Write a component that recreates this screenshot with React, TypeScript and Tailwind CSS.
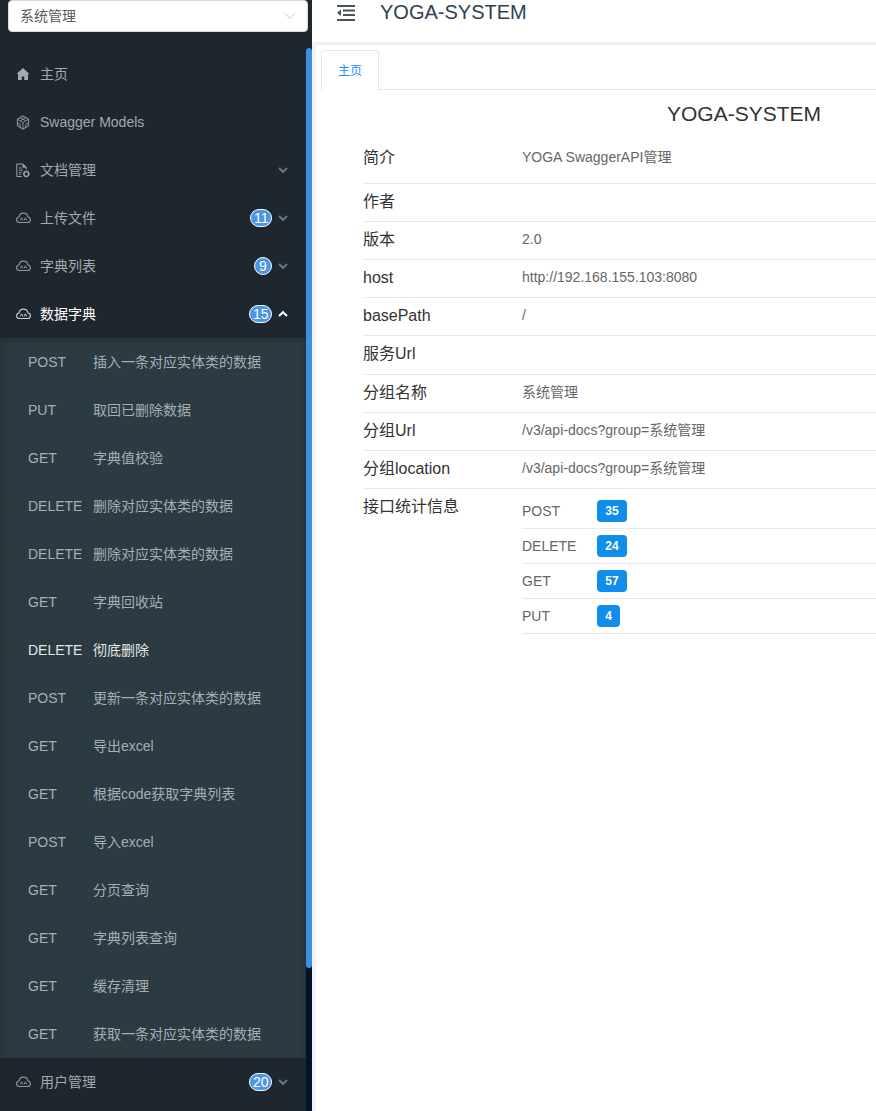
import React from "react";

const CJK = '"Liberation Sans","Noto Sans CJK SC",sans-serif';

function Chevron({ up = false, light = false }: { up?: boolean; light?: boolean }) {
  return (
    <svg width="10" height="10" viewBox="0 0 10 10" className="ml-[6px] shrink-0">
      <path
        d={up ? "M1 7 L5 3.2 L9 7" : "M1 3 L5 6.8 L9 3"}
        fill="none"
        stroke={light ? "#ffffff" : "#6f767b"}
        strokeWidth="2"
      />
    </svg>
  );
}

function Cloud({ color = "#8f969b" }: { color?: string }) {
  return (
    <svg width="15" height="14" viewBox="0 0 15 14" className="shrink-0 -ml-[0.5px]">
      <path
        d="M3.6 11.5 C1.7 11.5 .6 10.2 .6 8.7 C.6 7.3 1.6 6.2 3 6 C3.4 3.6 5.2 2.1 7.5 2.1 C9.8 2.1 11.5 3.6 12 6 C13.4 6.2 14.4 7.3 14.4 8.7 C14.4 10.2 13.3 11.5 11.4 11.5 Z"
        fill="none"
        stroke={color}
        strokeWidth="1.1"
      />
      <path d="M4.4 9.4 L5.6 6.8 L6.8 9.4 M8.2 9.4 L9.4 6.8 L10.6 9.4" fill="none" stroke={color} strokeWidth="1" />
    </svg>
  );
}

function Home() {
  return (
    <svg width="14" height="14" viewBox="0 0 14 14" className="shrink-0">
      <path d="M7 1 L13.2 6.8 L12 7.2 V13 H8.2 V9.4 H5.8 V13 H2 V7.2 L.8 6.8 Z" fill="#a3a9ad" />
    </svg>
  );
}

function Sandbox() {
  return (
    <svg width="14" height="15" viewBox="0 0 14 15" className="shrink-0" fill="none" stroke="#8d9499" strokeWidth="1.1">
      <path d="M7 1 L12.6 4.2 V10.8 L7 14 L1.4 10.8 V4.2 Z" />
      <path
        d="M1.4 4.2 L7 7.5 L12.6 4.2 M7 7.5 V14 M4.2 2.6 L9.8 5.9 M9.8 2.6 L4.2 5.9 M4.2 9 V12.4 M9.8 9 V12.4 M1.4 8 L4.2 9 M12.6 8 L9.8 9"
        strokeWidth=".9"
      />
    </svg>
  );
}

function DocIcon() {
  return (
    <svg width="14" height="15" viewBox="0 0 14 15" className="shrink-0" fill="none" stroke="#9aa1a6" strokeWidth="1">
      <path d="M6 13.5 H.8 V1 H7 L10.2 4.2 V6.5" />
      <path d="M7 1 V4.2 H10.2 Z" fill="#9aa1a6" />
      <path d="M2.8 5 H6 M2.8 7.2 H7 M2.8 9.4 H6 M2.8 11.4 H5" strokeWidth=".9" />
      <circle cx="10.3" cy="11" r="2.4" strokeWidth="1.5" />
      <path d="M10.3 7.6 V8.6 M10.3 13.4 V14.4 M6.9 11 H7.9 M12.7 11 H13.7" strokeWidth="1" />
    </svg>
  );
}

function Badge({ n }: { n: number }) {
  return (
    <span className="min-w-[18px] h-[18px] px-[2.5px] rounded-[9px] bg-[#4c96e8] border border-white text-white text-[14px] leading-[16px] text-center">
      {n}
    </span>
  );
}

function TopItem({
  icon,
  label,
  badge,
  chevron,
  open,
}: {
  icon: React.ReactNode;
  label: string;
  badge?: number;
  chevron?: boolean;
  open?: boolean;
}) {
  return (
    <div className="h-[48px] flex items-center pl-[16px] pr-[18px]">
      <span className="w-[24px] flex items-center">{icon}</span>
      <span className={`text-[14px] flex-1 ${open ? "text-white" : "text-[#a3a9ad]"}`}>{label}</span>
      {badge !== undefined && <Badge n={badge} />}
      {chevron && <Chevron up={open} light={open} />}
    </div>
  );
}

const subItems: [string, string, boolean?][] = [
  ["POST", "插入一条对应实体类的数据"],
  ["PUT", "取回已删除数据"],
  ["GET", "字典值校验"],
  ["DELETE", "删除对应实体类的数据"],
  ["DELETE", "删除对应实体类的数据"],
  ["GET", "字典回收站"],
  ["DELETE", "彻底删除", true],
  ["POST", "更新一条对应实体类的数据"],
  ["GET", "导出excel"],
  ["GET", "根据code获取字典列表"],
  ["POST", "导入excel"],
  ["GET", "分页查询"],
  ["GET", "字典列表查询"],
  ["GET", "缓存清理"],
  ["GET", "获取一条对应实体类的数据"],
];

function SubItem({ method, label, active }: { method: string; label: string; active?: boolean }) {
  return (
    <div className={`h-[48px] flex items-center pl-[28px] text-[14px] ${active ? "text-[#e4e7e9]" : "text-[#a7aeb3]"}`}>
      <span className="w-[65px] shrink-0">{method}</span>
      <span>{label}</span>
    </div>
  );
}

const rows: [string, string, number, number][] = [
  ["简介", "YOGA SwaggerAPI管理", 46, 6],
  ["作者", "", 38, 2],
  ["版本", "2.0", 38, 2],
  ["host", "http://192.168.155.103:8080", 38, 2],
  ["basePath", "/", 38, 2],
  ["服务Url", "", 39, 2],
  ["分组名称", "系统管理", 38, 2],
  ["分组Url", "/v3/api-docs?group=系统管理", 38, 2],
  ["分组location", "/v3/api-docs?group=系统管理", 38, 2],
];

const stats: [string, number, number, number][] = [
  ["POST", 35, 40, 5],
  ["DELETE", 24, 35, 0],
  ["GET", 57, 35, 0],
  ["PUT", 4, 35, 0],
];

export default function App() {
  return (
    <div className="w-[876px] h-[1111px] overflow-hidden flex bg-white" style={{ fontFamily: CJK }}>
      <aside className="relative w-[312px] shrink-0 bg-[#001529] flex flex-col">
        <div className="h-[48px] shrink-0 bg-[#1f272e] pl-[8px]">
          <div className="w-[300px] h-[32px] bg-white border border-[#d9d9d9] rounded-[4px] flex items-center justify-between pl-[11px] pr-[11px]">
            <span className="text-[14px] text-[#595959]">系统管理</span>
            <svg width="12" height="12" viewBox="0 0 12 12">
              <path d="M1 3.5 L6 8.5 L11 3.5" fill="none" stroke="#c4c4c4" strokeWidth="1" />
            </svg>
          </div>
        </div>
        <div className="w-[306px] flex-1 bg-[#1f272e] pt-[2px] flex flex-col">
          <TopItem icon={<Home />} label="主页" />
          <TopItem icon={<Sandbox />} label="Swagger Models" />
          <TopItem icon={<DocIcon />} label="文档管理" chevron />
          <TopItem icon={<Cloud />} label="上传文件" badge={11} chevron />
          <TopItem icon={<Cloud />} label="字典列表" badge={9} chevron />
          <TopItem icon={<Cloud color="#c9cdd0" />} label="数据字典" badge={15} chevron open />
          <div className="bg-[#2c3b41] shadow-[inset_0_2px_8px_rgba(0,0,0,0.2)]">
            {subItems.map(([m, l, a], i) => (
              <SubItem key={i} method={m} label={l} active={a} />
            ))}
          </div>
          <TopItem icon={<Cloud />} label="用户管理" badge={20} chevron />
        </div>
        <div className="absolute left-[306px] top-[48px] w-[6px] h-[920px] rounded-[3px] bg-[#3f8fdf]" />
      </aside>
      <main className="flex-1 min-w-0 bg-[#f0f2f5] flex flex-col">
        <header className="h-[42px] bg-white flex items-start text-[#2f4053]">
          <svg width="18" height="16" viewBox="0 0 18 16" className="ml-[25px] mt-[5px] shrink-0" fill="#47525e">
            <rect x="0" y="0" width="18" height="2" />
            <rect x="6" y="4.5" width="12" height="2" />
            <rect x="6" y="9" width="12" height="2" />
            <rect x="0" y="14" width="18" height="2" />
            <path d="M4 4.5 V11 L0 7.7 Z" />
          </svg>
          <span className="ml-[25px] text-[20px] leading-[24px]">YOGA-SYSTEM</span>
        </header>
        <div className="mt-[3px] ml-[4px] flex-1 bg-white pl-[5px] overflow-hidden">
          <div className="h-[45px] border-b border-[#e8e8e8] flex items-end">
            <div className="w-[58px] h-[40px] border border-b-0 border-[#e8e8e8] rounded-t-[4px] bg-white text-[#1890ff] text-[12px] flex items-center justify-center -mb-px">
              主页
            </div>
          </div>
          <div className="pl-[42px] w-[900px]">
            <div className="h-[48px] w-[762px] text-center text-[21px] text-[#333] leading-[48px]">YOGA-SYSTEM</div>
            {rows.map(([k, v, h, pb]) => (
              <div key={k} className="flex items-center border-b border-[#e8e8e8]" style={{ height: h, paddingBottom: pb }}>
                <span className="w-[159px] shrink-0 text-[16px] text-[#333]">{k}</span>
                <span className="text-[14px] text-[#666]">{v}</span>
              </div>
            ))}
            <div className="flex">
              <span className="w-[159px] shrink-0 text-[16px] text-[#333] pt-[6px]">接口统计信息</span>
              <div className="flex-1">
                {stats.map(([k, n, h, pt]) => (
                  <div key={k} className="flex items-center border-b border-[#e8e8e8]" style={{ height: h, paddingTop: pt }}>
                    <span className="w-[75px] text-[14px] text-[#666]">{k}</span>
                    <span className={`h-[22px] rounded-[4px] bg-[#108ee9] text-white text-[12px] font-bold leading-[22px] text-center ${n > 9 ? "w-[30px]" : "w-[23px]"}`}>{n}</span>
                  </div>
                ))}
              </div>
            </div>
          </div>
        </div>
      </main>
    </div>
  );
}
